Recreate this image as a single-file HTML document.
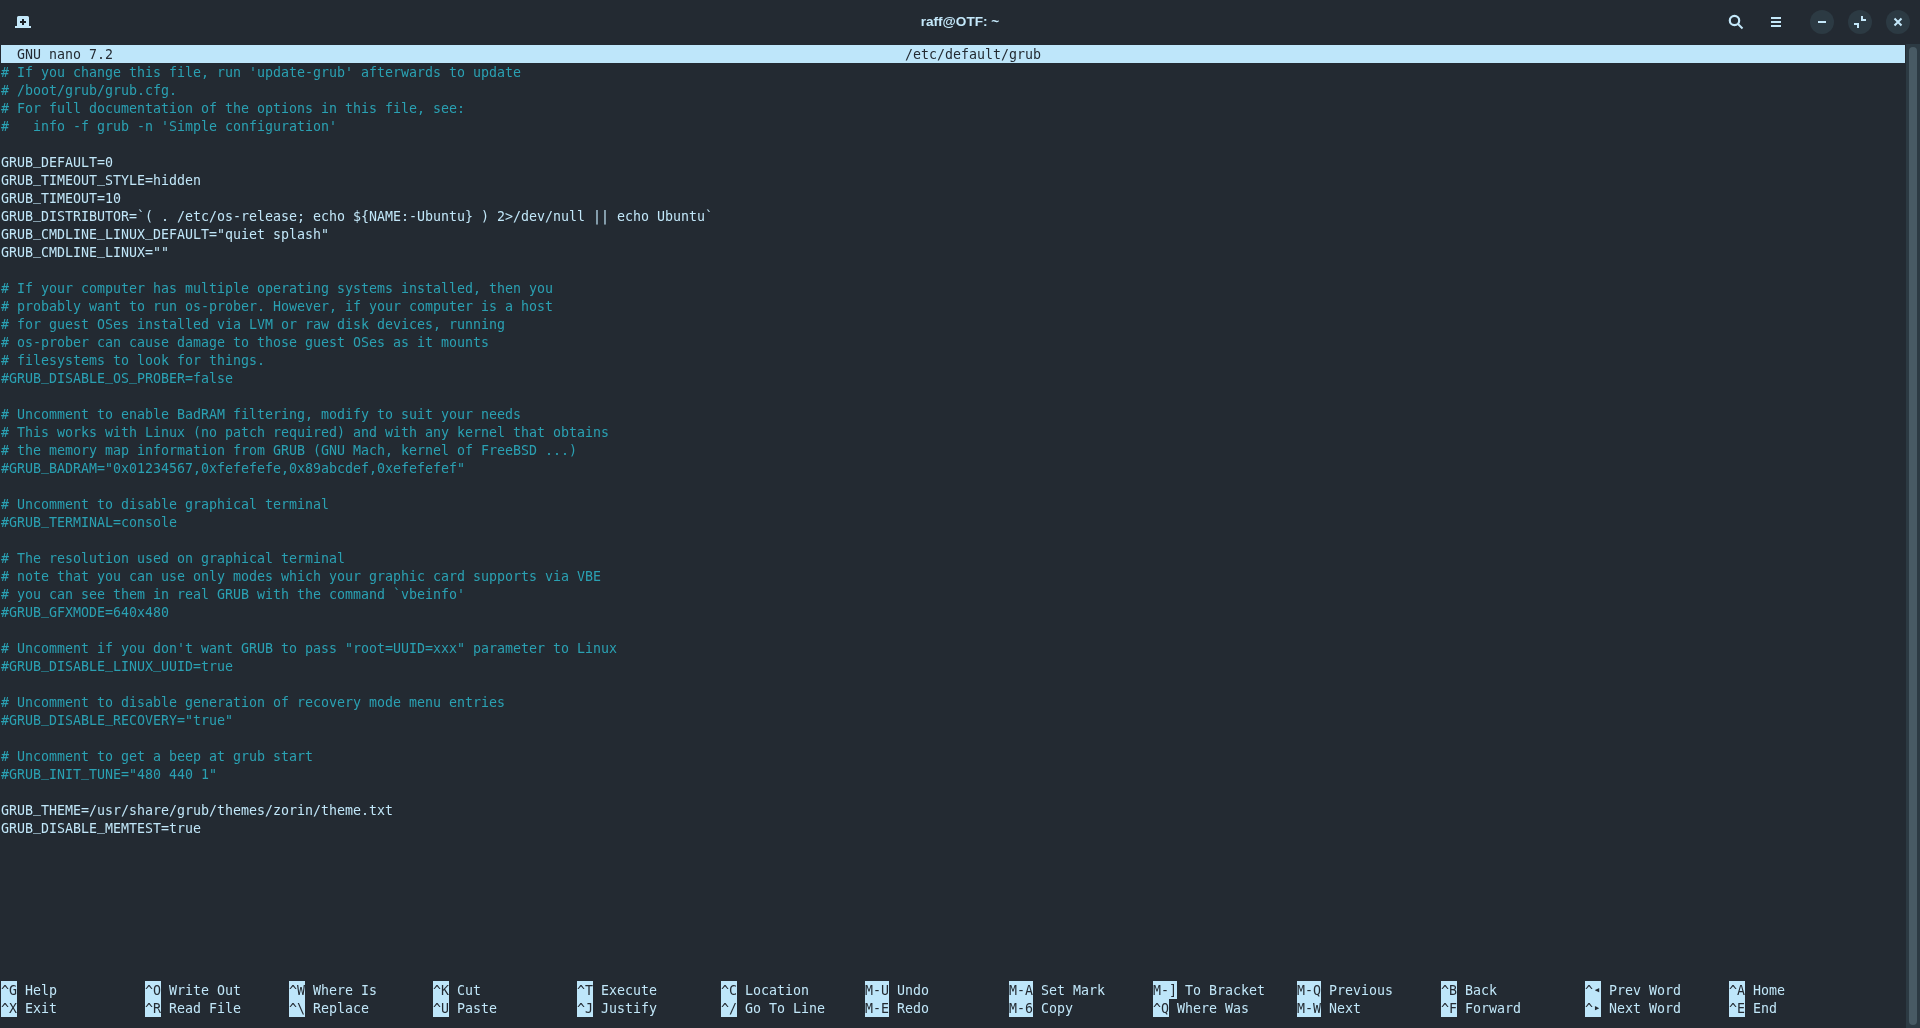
<!DOCTYPE html>
<html lang="en"><head><meta charset="utf-8"><title>raff@OTF: ~</title>
<style>
html,body{margin:0;padding:0;}
body{width:1920px;height:1028px;overflow:hidden;background:#232a32;position:relative;font-family:"Liberation Sans",sans-serif;}
#hdr{position:absolute;left:0;top:0;width:1920px;height:44px;background:#232a32;}
#ttl{position:absolute;left:0;top:0;width:1920px;height:44px;line-height:44px;text-align:center;color:#c4e8fa;font:bold 13.6px/44px "Liberation Sans",sans-serif;}
.ico{position:absolute;}
.cb{position:absolute;top:10px;width:24px;height:24px;border-radius:12px;background:#2c3a43;}
#term{position:absolute;left:0;top:44px;width:1906px;height:984px;background:#232a32;}
#sb{position:absolute;left:1906px;top:44px;width:14px;height:984px;background:#2c3a43;}
#th{position:absolute;left:3px;top:3px;width:8px;height:978px;border-radius:4px;background:#485a64;}
.r{position:absolute;left:1px;height:18px;line-height:18px;white-space:pre;font-family:"DejaVu Sans Mono","Liberation Mono",monospace;font-size:13.29px;letter-spacing:0.004px;color:#c1e7f9;}
.r span.t{position:relative;top:1px;}
.c{color:#2aa1b3;}
u{text-decoration:none;position:relative;top:-3px;}
#txt{position:absolute;left:0;top:0;width:1906px;height:1028px;will-change:transform;}
#ttl{will-change:transform;}
#tb{position:absolute;left:1px;top:45px;width:1904px;height:18px;background:#bee6fa;}
.k{background:#bee6fa;color:#232a32;display:inline-block;height:18px;}
.inv{color:#232a32;}
.tri{font-style:normal;display:inline-block;width:8px;text-align:center;font-family:"DejaVu Sans Mono",monospace;font-size:11px;position:relative;top:-2px;line-height:1;}
.k b{font-weight:normal;position:relative;top:1px;}
.h{position:absolute;height:18px;line-height:18px;white-space:pre;font-family:"DejaVu Sans Mono","Liberation Mono",monospace;font-size:13.29px;letter-spacing:0.004px;color:#c1e7f9;}
</style></head><body>
<div id="hdr">
<div id="ttl">raff@OTF: ~</div>
<svg class="ico" style="left:14px;top:14px" width="18" height="16" viewBox="0 0 18 16"><path d="M4.500 2h9a1.500 1.500 0 0 1 1.500 1.500V12h2v2H1v-2h2V3.500a1.500 1.500 0 0 1 1.500-1.500z" fill="#c4e8fa"/><path d="M9 5v6M6 8h6" stroke="#1b2127" stroke-width="2"/></svg>
<svg class="ico" style="left:1726px;top:12px" width="20" height="20" viewBox="0 0 20 20"><circle cx="8.500" cy="8.500" r="4.700" fill="none" stroke="#c4e8fa" stroke-width="2.200"/><path d="M12 12l4.500 4.500" stroke="#c4e8fa" stroke-width="2"/></svg>
<svg class="ico" style="left:1771px;top:17px" width="10" height="10" viewBox="0 0 10 10"><path d="M0 0h10v2H0zM0 4h10v2H0zM0 8h10v2H0z" fill="#c4e8fa"/></svg>
<div class="cb" style="left:1810px"><svg width="24" height="24" viewBox="0 0 24 24"><path d="M8 11h8v2H8z" fill="#c4e8fa"/></svg></div>
<div class="cb" style="left:1848px"><svg width="24" height="24" viewBox="0 0 24 24"><path d="M13 6h2v3h3v2h-5zM6 13h5v5H9v-3H6z" fill="#c4e8fa"/></svg></div>
<div class="cb" style="left:1886px"><svg width="24" height="24" viewBox="0 0 24 24"><path d="M8.500 8.500l7 7M15.500 8.500l-7 7" stroke="#c4e8fa" stroke-width="2"/></svg></div>
</div>
<div id="term"></div>
<div id="sb"><div id="th"></div></div>
<div id="tb"></div>
<div id="txt">
<div class="r inv" style="top:45px"><span class="t">  GNU nano 7.2                                                                                                   /etc/default/grub</span></div>
<div class="r c" style="top:63px"><span class="t"># If you change this file, run 'update-grub' afterwards to update</span></div>
<div class="r c" style="top:81px"><span class="t"># /boot/grub/grub.cfg.</span></div>
<div class="r c" style="top:99px"><span class="t"># For full documentation of the options in this file, see:</span></div>
<div class="r c" style="top:117px"><span class="t">#   info -f grub -n 'Simple configuration'</span></div>
<div class="r " style="top:153px"><span class="t">GRUB<u>_</u>DEFAULT=0</span></div>
<div class="r " style="top:171px"><span class="t">GRUB<u>_</u>TIMEOUT<u>_</u>STYLE=hidden</span></div>
<div class="r " style="top:189px"><span class="t">GRUB<u>_</u>TIMEOUT=10</span></div>
<div class="r " style="top:207px"><span class="t">GRUB<u>_</u>DISTRIBUTOR=`( . /etc/os-release; echo ${NAME:-Ubuntu} ) 2&gt;/dev/null || echo Ubuntu`</span></div>
<div class="r " style="top:225px"><span class="t">GRUB<u>_</u>CMDLINE<u>_</u>LINUX<u>_</u>DEFAULT="quiet splash"</span></div>
<div class="r " style="top:243px"><span class="t">GRUB<u>_</u>CMDLINE<u>_</u>LINUX=""</span></div>
<div class="r c" style="top:279px"><span class="t"># If your computer has multiple operating systems installed, then you</span></div>
<div class="r c" style="top:297px"><span class="t"># probably want to run os-prober. However, if your computer is a host</span></div>
<div class="r c" style="top:315px"><span class="t"># for guest OSes installed via LVM or raw disk devices, running</span></div>
<div class="r c" style="top:333px"><span class="t"># os-prober can cause damage to those guest OSes as it mounts</span></div>
<div class="r c" style="top:351px"><span class="t"># filesystems to look for things.</span></div>
<div class="r c" style="top:369px"><span class="t">#GRUB<u>_</u>DISABLE<u>_</u>OS<u>_</u>PROBER=false</span></div>
<div class="r c" style="top:405px"><span class="t"># Uncomment to enable BadRAM filtering, modify to suit your needs</span></div>
<div class="r c" style="top:423px"><span class="t"># This works with Linux (no patch required) and with any kernel that obtains</span></div>
<div class="r c" style="top:441px"><span class="t"># the memory map information from GRUB (GNU Mach, kernel of FreeBSD ...)</span></div>
<div class="r c" style="top:459px"><span class="t">#GRUB<u>_</u>BADRAM="0x01234567,0xfefefefe,0x89abcdef,0xefefefef"</span></div>
<div class="r c" style="top:495px"><span class="t"># Uncomment to disable graphical terminal</span></div>
<div class="r c" style="top:513px"><span class="t">#GRUB<u>_</u>TERMINAL=console</span></div>
<div class="r c" style="top:549px"><span class="t"># The resolution used on graphical terminal</span></div>
<div class="r c" style="top:567px"><span class="t"># note that you can use only modes which your graphic card supports via VBE</span></div>
<div class="r c" style="top:585px"><span class="t"># you can see them in real GRUB with the command `vbeinfo'</span></div>
<div class="r c" style="top:603px"><span class="t">#GRUB<u>_</u>GFXMODE=640x480</span></div>
<div class="r c" style="top:639px"><span class="t"># Uncomment if you don't want GRUB to pass "root=UUID=xxx" parameter to Linux</span></div>
<div class="r c" style="top:657px"><span class="t">#GRUB<u>_</u>DISABLE<u>_</u>LINUX<u>_</u>UUID=true</span></div>
<div class="r c" style="top:693px"><span class="t"># Uncomment to disable generation of recovery mode menu entries</span></div>
<div class="r c" style="top:711px"><span class="t">#GRUB<u>_</u>DISABLE<u>_</u>RECOVERY="true"</span></div>
<div class="r c" style="top:747px"><span class="t"># Uncomment to get a beep at grub start</span></div>
<div class="r c" style="top:765px"><span class="t">#GRUB<u>_</u>INIT<u>_</u>TUNE="480 440 1"</span></div>
<div class="r " style="top:801px"><span class="t">GRUB<u>_</u>THEME=/usr/share/grub/themes/zorin/theme.txt</span></div>
<div class="r " style="top:819px"><span class="t">GRUB<u>_</u>DISABLE<u>_</u>MEMTEST=true</span></div>
<div class="h" style="top:981px;left:1px"><span class="k"><span class="t" style="position:relative;top:1px"><b>^</b>G</span></span><span class="t" style="position:relative;top:1px"> Help</span></div>
<div class="h" style="top:981px;left:145px"><span class="k"><span class="t" style="position:relative;top:1px"><b>^</b>O</span></span><span class="t" style="position:relative;top:1px"> Write Out</span></div>
<div class="h" style="top:981px;left:289px"><span class="k"><span class="t" style="position:relative;top:1px"><b>^</b>W</span></span><span class="t" style="position:relative;top:1px"> Where Is</span></div>
<div class="h" style="top:981px;left:433px"><span class="k"><span class="t" style="position:relative;top:1px"><b>^</b>K</span></span><span class="t" style="position:relative;top:1px"> Cut</span></div>
<div class="h" style="top:981px;left:577px"><span class="k"><span class="t" style="position:relative;top:1px"><b>^</b>T</span></span><span class="t" style="position:relative;top:1px"> Execute</span></div>
<div class="h" style="top:981px;left:721px"><span class="k"><span class="t" style="position:relative;top:1px"><b>^</b>C</span></span><span class="t" style="position:relative;top:1px"> Location</span></div>
<div class="h" style="top:981px;left:865px"><span class="k"><span class="t" style="position:relative;top:1px">M-U</span></span><span class="t" style="position:relative;top:1px"> Undo</span></div>
<div class="h" style="top:981px;left:1009px"><span class="k"><span class="t" style="position:relative;top:1px">M-A</span></span><span class="t" style="position:relative;top:1px"> Set Mark</span></div>
<div class="h" style="top:981px;left:1153px"><span class="k"><span class="t" style="position:relative;top:1px">M-]</span></span><span class="t" style="position:relative;top:1px"> To Bracket</span></div>
<div class="h" style="top:981px;left:1297px"><span class="k"><span class="t" style="position:relative;top:1px">M-Q</span></span><span class="t" style="position:relative;top:1px"> Previous</span></div>
<div class="h" style="top:981px;left:1441px"><span class="k"><span class="t" style="position:relative;top:1px"><b>^</b>B</span></span><span class="t" style="position:relative;top:1px"> Back</span></div>
<div class="h" style="top:981px;left:1585px"><span class="k"><span class="t" style="position:relative;top:1px"><b>^</b><i class="tri">◂</i></span></span><span class="t" style="position:relative;top:1px"> Prev Word</span></div>
<div class="h" style="top:981px;left:1729px"><span class="k"><span class="t" style="position:relative;top:1px"><b>^</b>A</span></span><span class="t" style="position:relative;top:1px"> Home</span></div>
<div class="h" style="top:999px;left:1px"><span class="k"><span class="t" style="position:relative;top:1px"><b>^</b>X</span></span><span class="t" style="position:relative;top:1px"> Exit</span></div>
<div class="h" style="top:999px;left:145px"><span class="k"><span class="t" style="position:relative;top:1px"><b>^</b>R</span></span><span class="t" style="position:relative;top:1px"> Read File</span></div>
<div class="h" style="top:999px;left:289px"><span class="k"><span class="t" style="position:relative;top:1px"><b>^</b>\</span></span><span class="t" style="position:relative;top:1px"> Replace</span></div>
<div class="h" style="top:999px;left:433px"><span class="k"><span class="t" style="position:relative;top:1px"><b>^</b>U</span></span><span class="t" style="position:relative;top:1px"> Paste</span></div>
<div class="h" style="top:999px;left:577px"><span class="k"><span class="t" style="position:relative;top:1px"><b>^</b>J</span></span><span class="t" style="position:relative;top:1px"> Justify</span></div>
<div class="h" style="top:999px;left:721px"><span class="k"><span class="t" style="position:relative;top:1px"><b>^</b>/</span></span><span class="t" style="position:relative;top:1px"> Go To Line</span></div>
<div class="h" style="top:999px;left:865px"><span class="k"><span class="t" style="position:relative;top:1px">M-E</span></span><span class="t" style="position:relative;top:1px"> Redo</span></div>
<div class="h" style="top:999px;left:1009px"><span class="k"><span class="t" style="position:relative;top:1px">M-6</span></span><span class="t" style="position:relative;top:1px"> Copy</span></div>
<div class="h" style="top:999px;left:1153px"><span class="k"><span class="t" style="position:relative;top:1px"><b>^</b>Q</span></span><span class="t" style="position:relative;top:1px"> Where Was</span></div>
<div class="h" style="top:999px;left:1297px"><span class="k"><span class="t" style="position:relative;top:1px">M-W</span></span><span class="t" style="position:relative;top:1px"> Next</span></div>
<div class="h" style="top:999px;left:1441px"><span class="k"><span class="t" style="position:relative;top:1px"><b>^</b>F</span></span><span class="t" style="position:relative;top:1px"> Forward</span></div>
<div class="h" style="top:999px;left:1585px"><span class="k"><span class="t" style="position:relative;top:1px"><b>^</b><i class="tri">▸</i></span></span><span class="t" style="position:relative;top:1px"> Next Word</span></div>
<div class="h" style="top:999px;left:1729px"><span class="k"><span class="t" style="position:relative;top:1px"><b>^</b>E</span></span><span class="t" style="position:relative;top:1px"> End</span></div>
</div>
</body></html>
